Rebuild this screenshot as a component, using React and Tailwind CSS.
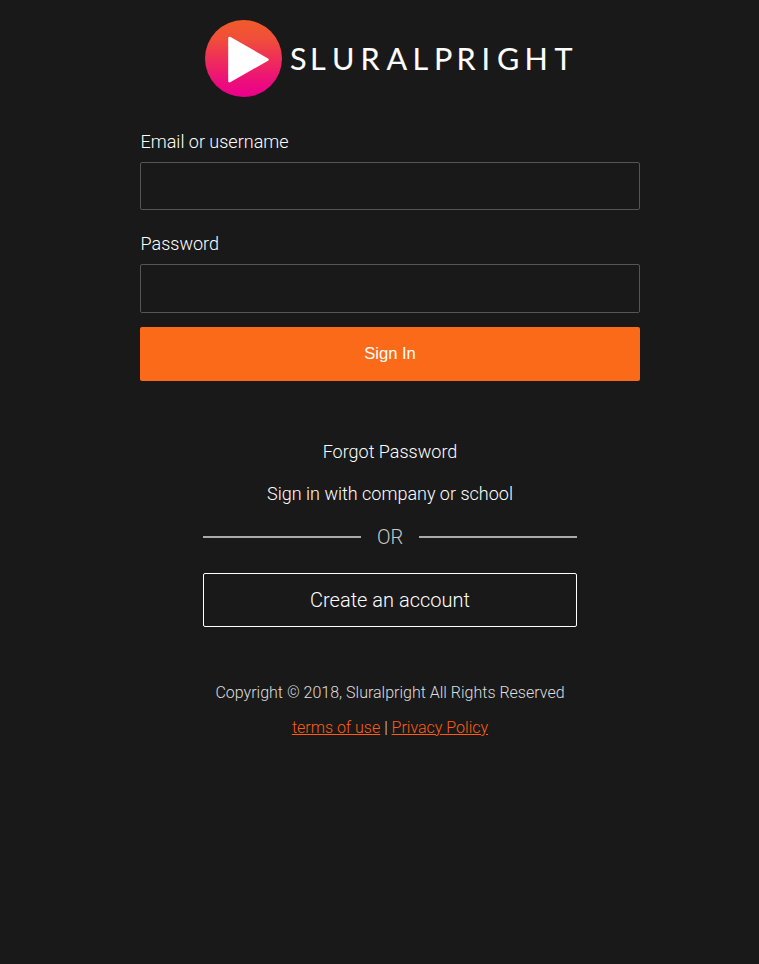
function Logo() {
  return (
    <svg className="mx-auto block h-[77px] w-[370px]" viewBox="0 0 370 77" role="img" aria-label="Sluralpright">
      <defs>
        <linearGradient id="disc" x1="0" y1="0" x2="0" y2="1">
          <stop offset="0" stopColor="#f15b2a" />
          <stop offset="0.25" stopColor="#f04e3a" />
          <stop offset="0.5" stopColor="#ef2f58" />
          <stop offset="0.8" stopColor="#ec0e7b" />
          <stop offset="1" stopColor="#ec008c" />
        </linearGradient>
      </defs>
      <circle cx="38.5" cy="38.5" r="38.5" fill="url(#disc)" />
      <path d="M24.5 18L62.4 39.6L24.5 61.2Z" fill="#fff" stroke="#fff" strokeWidth="2.6" strokeLinejoin="round" />
      <text
        x="85 105 127 155.5 181.5 207.5 229 251.5 276.5 292 319.5 349.5"
        y="50"
        className="fill-white stroke-white font-['Lato',sans-serif] text-[30.5px] font-normal [stroke-width:0.1px]"
      >
        SLURALPRIGHT
      </text>
    </svg>
  );
}

function Field({ label, type, className }) {
  return (
    <label className="block text-lg font-light leading-6 text-white">
      <span className="pl-[0.5px]">{label}</span>
      <input type={type} className={`mt-2 block w-full rounded-xs border border-[#555] bg-transparent px-3 outline-none ${className}`} />
    </label>
  );
}

export default function App() {
  return (
    <main className="min-h-screen bg-[#191919] pt-5 pl-[140px] font-['Roboto',sans-serif]">
      <div className="w-[500px]">
        <Logo />
        <form className="mt-[33px]">
          <Field label="Email or username" type="text" className="h-12" />
          <div className="mt-[22px]">
            <Field label="Password" type="password" className="h-[49px]" />
          </div>
          <button type="button" className="mt-3.5 block h-[54px] w-full rounded-xs bg-[#fb6a18] font-['Liberation_Sans',sans-serif] text-[16.6px] text-white">
            Sign In
          </button>
        </form>
        <div className="mt-[59px] flex flex-col items-center gap-[18px] text-lg font-light leading-6 text-white">
          <a>Forgot Password</a>
          <a>Sign in with company or school</a>
        </div>
        <div className="mx-auto mt-4 flex w-[374px] items-center gap-4">
          <div className="h-0.5 flex-1 bg-[#aaa]" />
          <span className="text-xl font-light leading-[30px] text-[#c8c8c8]">OR</span>
          <div className="h-0.5 flex-1 bg-[#aaa]" />
        </div>
        <button type="button" className="mx-auto mt-[21px] block h-[54px] w-[374px] rounded-xs border border-white text-xl font-light text-white">
          Create an account
        </button>
        <footer className="mt-[54px] text-center text-base font-light leading-6 text-[#ddd]">
          <p>Copyright © 2018, Sluralpright All Rights Reserved</p>
          <p className="mt-[11px]">
            <a className="text-[#ff5c14] underline">terms of use</a> | <a className="text-[#ff5c14] underline">Privacy Policy</a>
          </p>
        </footer>
      </div>
    </main>
  );
}
